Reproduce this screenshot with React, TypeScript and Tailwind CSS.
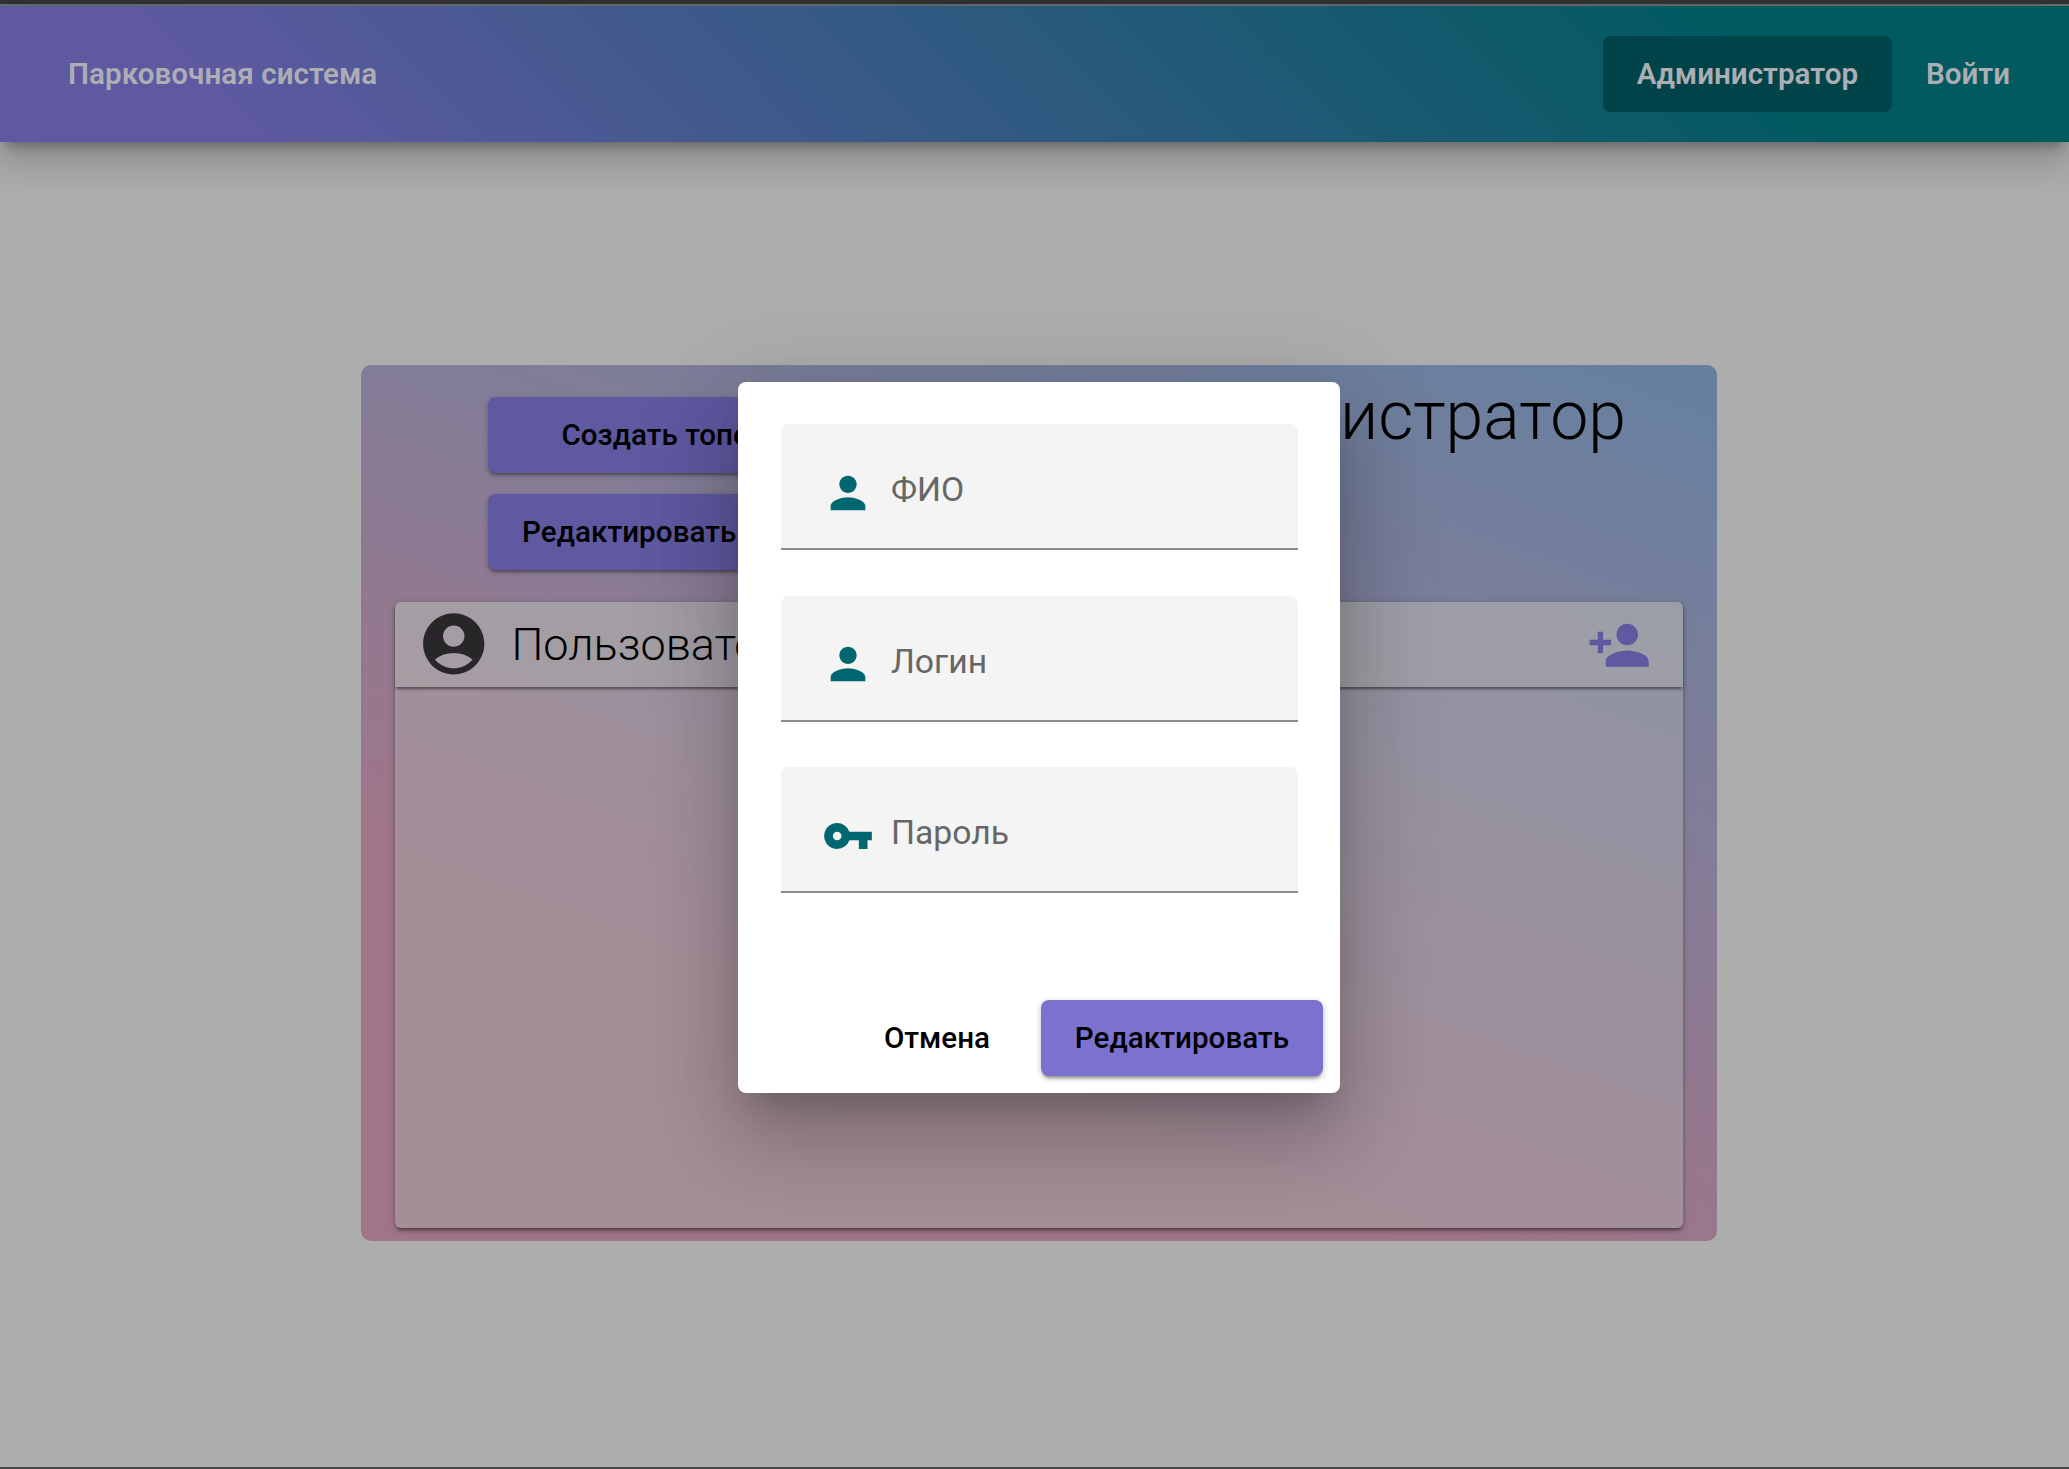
import React from "react";
import { MdAccountCircle, MdPerson, MdPersonAdd, MdVpnKey } from "react-icons/md";
import type { IconType } from "react-icons";

const fields: { label: string; icon: IconType }[] = [
  { label: "ФИО", icon: MdPerson },
  { label: "Логин", icon: MdPerson },
  { label: "Пароль", icon: MdVpnKey },
];

function Header() {
  return (
    <header className="relative flex h-[136px] shrink-0 items-center justify-between bg-[linear-gradient(45deg,#5e59a1_12%,#005a60_84%)] pl-[68px] pr-[59px] text-[29.6px] font-semibold text-[#adadb4] shadow-[0_10px_11px_-6px_rgba(0,0,0,0.28),0_20px_32px_2px_rgba(0,0,0,0.12),0_8px_42px_4px_rgba(0,0,0,0.1)]">
      <span className="whitespace-nowrap tracking-[0.05px]">Парковочная система</span>
      <nav className="flex items-center gap-[34px]">
        <button className="flex h-[76px] w-[289px] items-center justify-center rounded-lg bg-[#00444a]">Администратор</button>
        <button className="whitespace-nowrap">Войти</button>
      </nav>
    </header>
  );
}

function UsersPanel() {
  return (
    <section className="flex h-[626px] flex-col rounded-md bg-[#adadad]/45 shadow-[0_4px_3px_-2px_rgba(0,0,0,0.3),0_2px_4px_rgba(0,0,0,0.2),0_2px_9px_rgba(0,0,0,0.14)]">
      <div className="flex h-[85px] shrink-0 items-center rounded-t-md bg-[#adadad]/45 pl-[22px] pr-8 shadow-[0_4px_3px_-2px_rgba(0,0,0,0.3),0_2px_3px_rgba(0,0,0,0.24)]">
        <MdAccountCircle className="mb-0.5 size-[73.5px] shrink-0 text-[#282629]" />
        <h2 className="ml-[21px] text-[45px] font-light text-black">Пользователи</h2>
        <MdPersonAdd className="ml-auto mt-px size-[64.4px] shrink-0 text-[#5e59a1]" />
      </div>
    </section>
  );
}

function AdminCard() {
  return (
    <main className="mx-[361px] mt-[223px] h-[876px] w-[1356px] rounded-[10px] bg-[linear-gradient(20deg,#a17588_28%,#827d98_66%,#6580a0_100%)] px-[34px] pt-8">
      <div className="flex h-[205px] items-start justify-between pl-[93px] pr-[57px]">
        <div className="flex w-[420px] flex-col gap-[21px] text-[29.6px] font-medium text-black">
          <button className="h-[76px] rounded-lg bg-[#5e59a1] pl-[73.5px] text-left shadow-[0_3px_3px_-1px_rgba(0,0,0,0.3),0_2px_6px_rgba(0,0,0,0.2)]">Создать топологию</button>
          <button className="h-[76px] whitespace-nowrap rounded-lg bg-[#5e59a1] pl-[34px] text-left tracking-[0.05px] shadow-[0_3px_3px_-1px_rgba(0,0,0,0.3),0_2px_6px_rgba(0,0,0,0.2)]">Редактировать топологию</button>
        </div>
        <h1 className="-mt-[21px] text-[68px] font-light leading-[80px] text-black">Администратор</h1>
      </div>
      <UsersPanel />
    </main>
  );
}

function EditDialog() {
  return (
    <div className="absolute inset-0 flex items-start justify-center pl-[9px] pt-[382px]">
      <div role="dialog" className="flex h-[711px] w-[602px] flex-col rounded-lg bg-white px-[17px] pt-[42px] shadow-[0_23px_32px_-15px_rgba(0,0,0,0.2),0_51px_80px_6px_rgba(0,0,0,0.14),0_19px_97px_17px_rgba(0,0,0,0.12)]">
        <div className="flex flex-col gap-[45.5px] pl-[26px] pr-[25px]">
          {fields.map(({ label, icon: Icon }) => (
            <label key={label} className="flex h-[126px] items-center rounded-t-lg border-b-2 border-[#8c8c8c] bg-[#f4f4f4] pl-[41px]">
              <Icon className="mt-[13px] size-[52px] shrink-0 text-[#006771]" />
              <span className="ml-[17px] mt-[9px] text-[33.7px] text-[#666666]">{label}</span>
            </label>
          ))}
        </div>
        <div className="mt-auto flex items-center justify-end gap-[17px] pb-[17px] text-[29.6px] font-medium text-black">
          <button className="h-[76px] px-[34px]">Отмена</button>
          <button className="h-[76px] w-[282px] rounded-lg bg-[#7b72d0] tracking-[0.05px] shadow-[0_4px_3px_-2px_rgba(0,0,0,0.3),0_2px_6px_rgba(0,0,0,0.25)]">Редактировать</button>
        </div>
      </div>
    </div>
  );
}

export default function App() {
  return (
    <div className="relative flex h-[1469px] w-[2069px] flex-col overflow-hidden border-b-2 border-[#464646] bg-[#adadad] font-['Roboto',sans-serif]">
      <div className="h-1.5 shrink-0 border-b-2 border-[#686e73] bg-[#333333]" />
      <Header />
      <AdminCard />
      <EditDialog />
    </div>
  );
}
